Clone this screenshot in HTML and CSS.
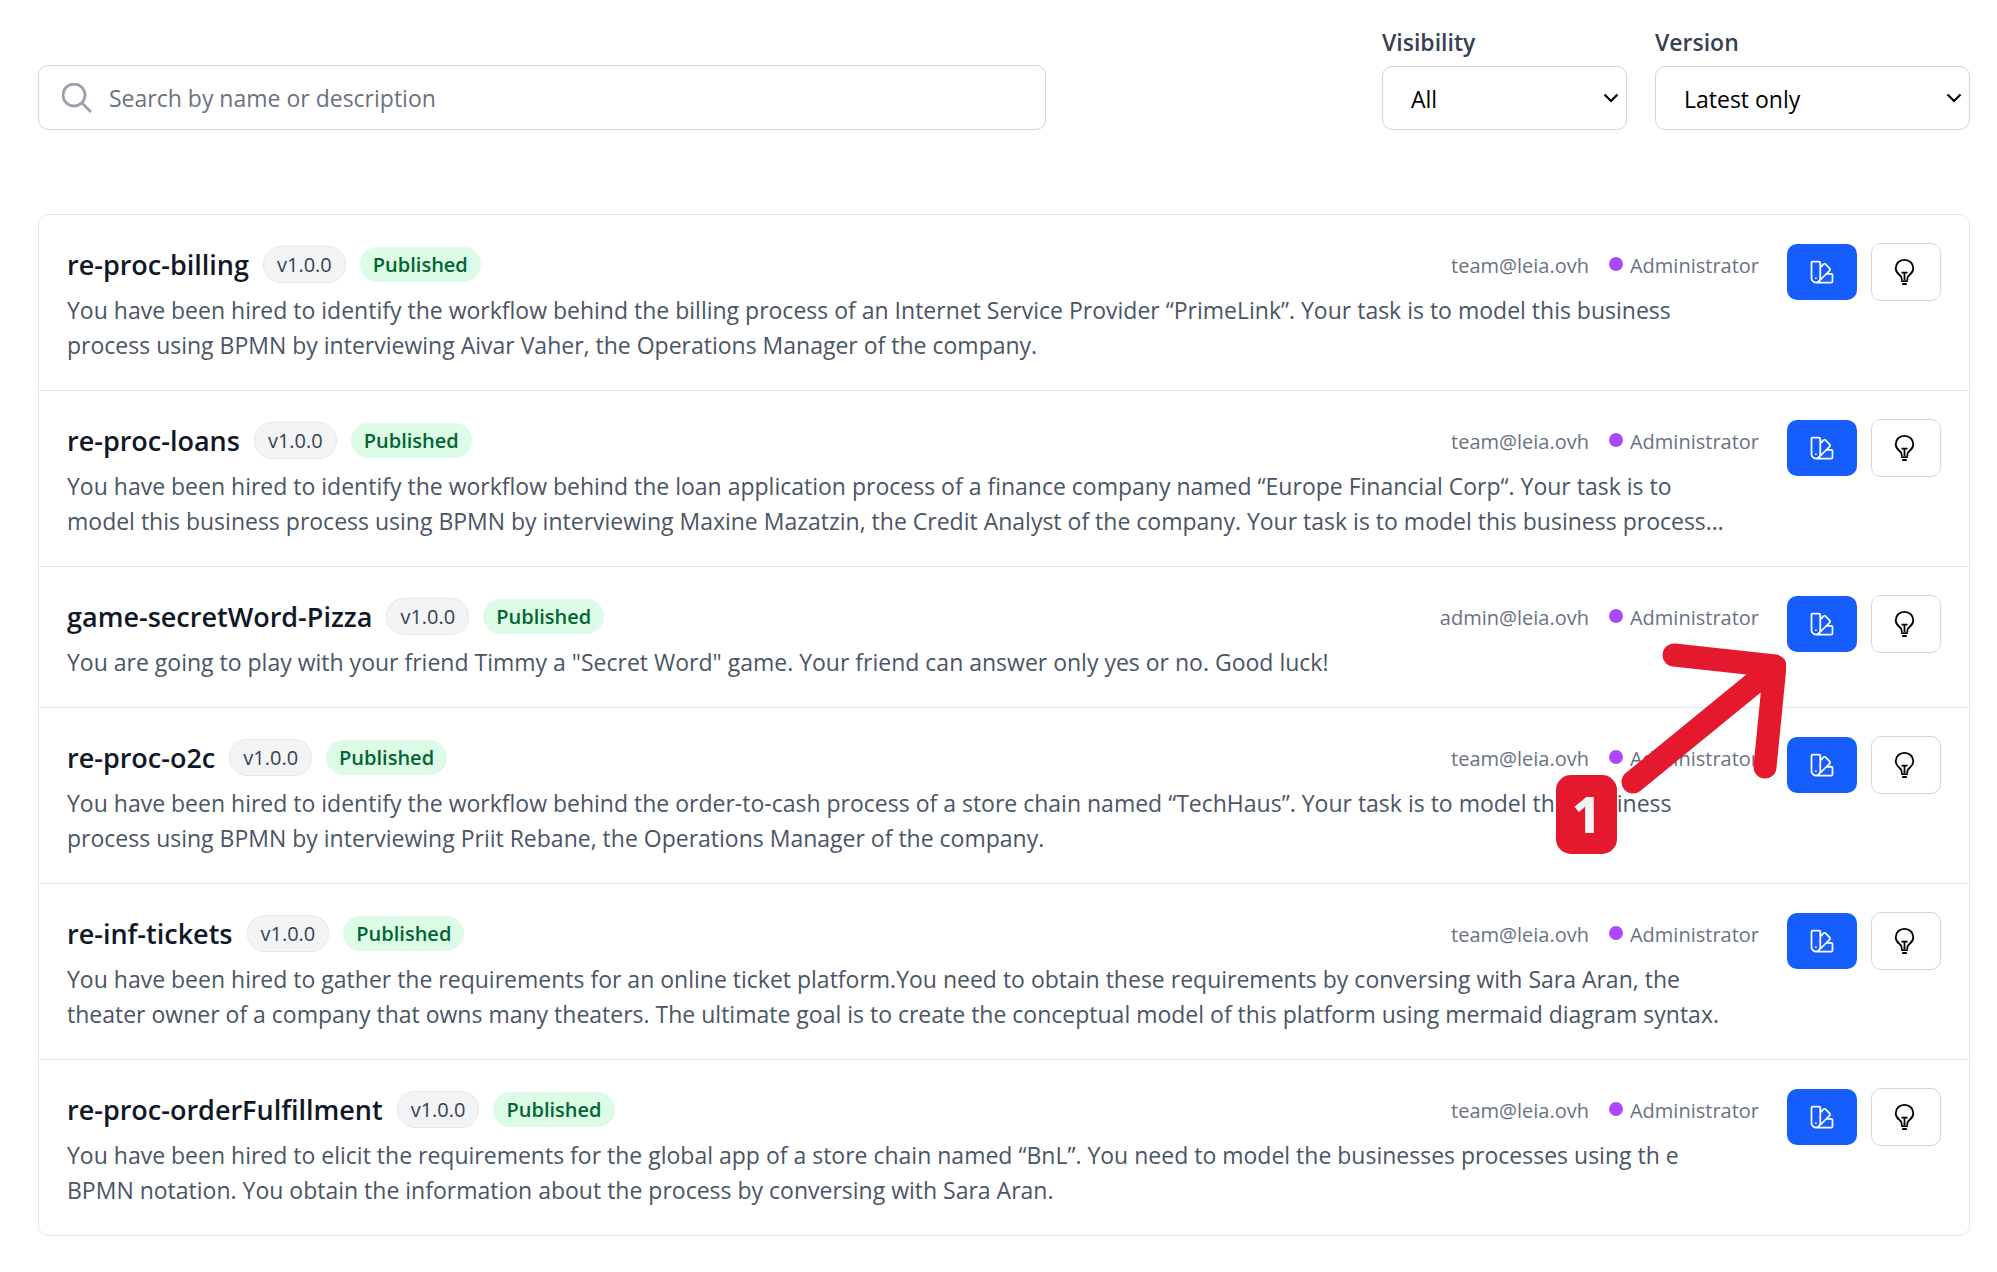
FILE: index.html
```html
<!DOCTYPE html>
<html lang="en">
<head>
<meta charset="utf-8">
<title>Activities</title>
<link rel="stylesheet" href="styles.css">
</head>
<body>
<svg class="sprite" aria-hidden="true">
  <symbol id="swatch" viewBox="0 0 24 24"><path fill="none" stroke="currentColor" stroke-width="1.5" stroke-linecap="round" stroke-linejoin="round" d="M4.098 19.902a3.75 3.75 0 0 0 5.304 0l6.401-6.402M6.75 21A3.75 3.75 0 0 1 3 17.25V4.125C3 3.504 3.504 3 4.125 3h5.25c.621 0 1.125.504 1.125 1.125v4.072M6.75 21a3.75 3.75 0 0 0 3.75-3.75V8.197M6.75 21h13.125c.621 0 1.125-.504 1.125-1.125v-5.25c0-.621-.504-1.125-1.125-1.125h-4.072M10.5 8.197l2.88-2.88c.438-.439 1.15-.439 1.59 0l3.712 3.713c.44.44.44 1.152 0 1.59l-2.879 2.88M6.75 17.25h.008v.008H6.75v-.008Z"/></symbol>
  <symbol id="bulb" viewBox="0 0 28 28"><g fill="none" stroke="currentColor" stroke-width="1.8"><path d="M9.700 22v-1.6c0-1.500-1-2.500-2.600-3.900A8.800 8.800 0 0 1 3.700 10.300C3.700 5.300 7.500 1.900 12.500 1.900s8.800 3.400 8.800 8.400a8.800 8.800 0 0 1-3.400 6.200c-1.600 1.400-2.600 2.400-2.600 3.900V22"/><path d="M9.500 14.600h6M12.500 14.600V22M9 23.100h7M10.200 26h4.600"/></g></symbol>
  <symbol id="chevron" viewBox="0 0 16 16"><path d="M1.500 4.500 8 11l6.500-6.500" fill="none" stroke="currentColor" stroke-width="2.200"/></symbol>
</svg>

<main class="page">
  <form class="filters">
    <div class="search">
      <svg class="search-icon" viewBox="0 0 30 30" aria-hidden="true"><path d="M20 20l9 9M23 12A11 11 0 1 1 1 12a11 11 0 0 1 22 0z" fill="none" stroke="currentColor" stroke-width="2.800"/></svg>
      <input class="search-input" type="text" placeholder="Search by name or description" aria-label="Search by name or description">
    </div>
    <div class="field field-visibility">
      <label for="visibility">Visibility</label>
      <div class="select-box">
        <select id="visibility"><option>All</option></select>
        <svg class="chevron" aria-hidden="true"><use href="#chevron"/></svg>
      </div>
    </div>
    <div class="field field-version">
      <label for="version">Version</label>
      <div class="select-box">
        <select id="version"><option>Latest only</option></select>
        <svg class="chevron" aria-hidden="true"><use href="#chevron"/></svg>
      </div>
    </div>
  </form>

  <div class="list-area">
  <ul class="list">
    <li class="row">
      <div class="content">
        <div class="head"><h2>re-proc-billing</h2><span class="badge version">v1.0.0</span><span class="badge published">Published</span><span class="owner">team@leia.ovh<i class="dot"></i>Administrator</span></div>
        <p>You have been hired to identify the workflow behind the billing process of an Internet Service Provider “PrimeLink”. Your task is to model this business<br>process using BPMN by interviewing Aivar Vaher, the Operations Manager of the company.</p>
      </div>
      <div class="actions"><button class="btn primary" type="button" aria-label="Design"><svg><use href="#swatch"/></svg></button><button class="btn outline" type="button" aria-label="Hint"><svg><use href="#bulb"/></svg></button></div>
    </li>
    <li class="row">
      <div class="content">
        <div class="head"><h2>re-proc-loans</h2><span class="badge version">v1.0.0</span><span class="badge published">Published</span><span class="owner">team@leia.ovh<i class="dot"></i>Administrator</span></div>
        <p>You have been hired to identify the workflow behind the loan application process of a finance company named “Europe Financial Corp“. Your task is to<br>model this business process using BPMN by interviewing Maxine Mazatzin, the Credit Analyst of the company. Your task is to model this business process…</p>
      </div>
      <div class="actions"><button class="btn primary" type="button" aria-label="Design"><svg><use href="#swatch"/></svg></button><button class="btn outline" type="button" aria-label="Hint"><svg><use href="#bulb"/></svg></button></div>
    </li>
    <li class="row">
      <div class="content">
        <div class="head"><h2>game-secretWord-Pizza</h2><span class="badge version">v1.0.0</span><span class="badge published">Published</span><span class="owner">admin@leia.ovh<i class="dot"></i>Administrator</span></div>
        <p>You are going to play with your friend Timmy a "Secret Word" game. Your friend can answer only yes or no. Good luck!</p>
      </div>
      <div class="actions"><button class="btn primary" type="button" aria-label="Design"><svg><use href="#swatch"/></svg></button><button class="btn outline" type="button" aria-label="Hint"><svg><use href="#bulb"/></svg></button></div>
    </li>
    <li class="row">
      <div class="content">
        <div class="head"><h2>re-proc-o2c</h2><span class="badge version">v1.0.0</span><span class="badge published">Published</span><span class="owner">team@leia.ovh<i class="dot"></i>Administrator</span></div>
        <p>You have been hired to identify the workflow behind the order-to-cash process of a store chain named “TechHaus”. Your task is to model this business<br>process using BPMN by interviewing Priit Rebane, the Operations Manager of the company.</p>
      </div>
      <div class="actions"><button class="btn primary" type="button" aria-label="Design"><svg><use href="#swatch"/></svg></button><button class="btn outline" type="button" aria-label="Hint"><svg><use href="#bulb"/></svg></button></div>
    </li>
    <li class="row">
      <div class="content">
        <div class="head"><h2>re-inf-tickets</h2><span class="badge version">v1.0.0</span><span class="badge published">Published</span><span class="owner">team@leia.ovh<i class="dot"></i>Administrator</span></div>
        <p>You have been hired to gather the requirements for an online ticket platform.You need to obtain these requirements by conversing with Sara Aran, the<br>theater owner of a company that owns many theaters. The ultimate goal is to create the conceptual model of this platform using mermaid diagram syntax.</p>
      </div>
      <div class="actions"><button class="btn primary" type="button" aria-label="Design"><svg><use href="#swatch"/></svg></button><button class="btn outline" type="button" aria-label="Hint"><svg><use href="#bulb"/></svg></button></div>
    </li>
    <li class="row">
      <div class="content">
        <div class="head"><h2>re-proc-orderFulfillment</h2><span class="badge version">v1.0.0</span><span class="badge published">Published</span><span class="owner">team@leia.ovh<i class="dot"></i>Administrator</span></div>
        <p>You have been hired to elicit the requirements for the global app of a store chain named “BnL”. You need to model the businesses processes using th e<br>BPMN notation. You obtain the information about the process by conversing with Sara Aran.</p>
      </div>
      <div class="actions"><button class="btn primary" type="button" aria-label="Design"><svg><use href="#swatch"/></svg></button><button class="btn outline" type="button" aria-label="Hint"><svg><use href="#bulb"/></svg></button></div>
    </li>
  </ul>
  <svg class="pointer" viewBox="0 0 166 152" aria-hidden="true"><path d="M13 139 155 23M54 12l101 11-10 101" fill="none" stroke="currentColor" stroke-width="23" stroke-linecap="round" stroke-linejoin="round"/></svg>
  <span class="step">1</span>
  </div>
</main>
</body>
</html>
```

FILE: styles.css
```css
* { box-sizing: border-box; }

body {
  margin: 0;
  background: #fff;
  color: #4a5565;
  font: 23px/35px "Open Sans", "Noto Sans", sans-serif;
}

.sprite { position: absolute; width: 0; height: 0; }

.page { padding: 25px 27px 36px 38px; }

.filters {
  display: flex;
  align-items: flex-end;
  gap: 28px;
  margin-bottom: 84px;
}

.search {
  display: flex;
  align-items: center;
  gap: 17px;
  width: 1008px;
  height: 65px;
  margin-right: auto;
  padding: 0 23px;
  border: 1px solid #d1d5dc;
  border-radius: 10px;
}

.search-icon { width: 30px; height: 30px; color: #99a1af; }

.search-input {
  flex: 1;
  min-width: 0;
  padding: 2px 0 0;
  border: 0;
  outline: 0;
  background: none;
  font: inherit;
}

.search-input::placeholder { color: #6a7282; opacity: 1; }

.field label {
  display: block;
  margin-bottom: 6px;
  color: #364153;
  font-weight: 600;
}

.field-visibility { width: 245px; }
.field-version { width: 315px; }

.select-box { display: grid; align-items: center; }
.select-box > * { grid-area: 1 / 1; }

.select-box select {
  appearance: none;
  width: 100%;
  height: 64px;
  padding: 2px 28px 0;
  border: 1px solid #d1d5dc;
  border-radius: 10px;
  background: #fff;
  color: #000;
  font: inherit;
}

.chevron {
  justify-self: end;
  width: 16px;
  height: 16px;
  margin-right: 8px;
  color: #000;
  pointer-events: none;
}

.list-area { position: relative; }

.list {
  margin: 0;
  padding: 0;
  list-style: none;
  border: 1px solid #e5e7eb;
  border-radius: 10px;
}

.row {
  display: flex;
  gap: 28px;
  padding: 28px 28px 27px;
}

.row + .row { border-top: 1px solid #e5e7eb; }

.content { flex: 1; min-width: 0; }

.head {
  display: flex;
  align-items: center;
  gap: 14px;
  height: 42px;
}

.head h2 {
  margin: 0;
  padding-top: 1px;
  color: #101828;
  font-size: 27px;
  font-weight: 600;
}

.badge {
  padding: 1px 13px 0;
  border-radius: 18px;
  font-size: 20px;
  line-height: 34px;
}

.version {
  border: 1px solid #e5e7eb;
  background: #f3f4f6;
  color: #364153;
}

.published {
  background: #dcfce7;
  color: #016630;
  font-weight: 600;
}

.owner {
  display: flex;
  align-items: center;
  margin-left: auto;
  padding-top: 2px;
  color: #6a7282;
  font-size: 20px;
}

.dot {
  width: 14px;
  height: 14px;
  margin: 0 7px 2px 20px;
  border-radius: 50%;
  background: #ad46ff;
}

.row p { margin: 8px 0 0; white-space: nowrap; }

.actions { display: flex; align-items: center; gap: 14px; height: 58px; }

.btn {
  display: grid;
  place-items: center;
  width: 70px;
  height: 58px;
  padding: 0;
  border: 1px solid #d1d5dc;
  border-radius: 10px;
  background: #fff;
  color: #000;
}

.btn.primary { height: 56px; border: 0; background: #155dfc; color: #fff; }
.btn svg { width: 28px; height: 28px; }

.pointer {
  position: absolute;
  top: 429px;
  right: 184px;
  width: 166px;
  height: 152px;
  color: #e5192d;
}

.step {
  position: absolute;
  top: 561px;
  right: 353px;
  width: 61px;
  height: 79px;
  border-radius: 15px;
  background: #e5192d;
  color: #f5f5f5;
  font-family: "Noto Sans", sans-serif;
  font-size: 50px;
  font-weight: 800;
  line-height: 79px;
  text-align: center;
}
```
